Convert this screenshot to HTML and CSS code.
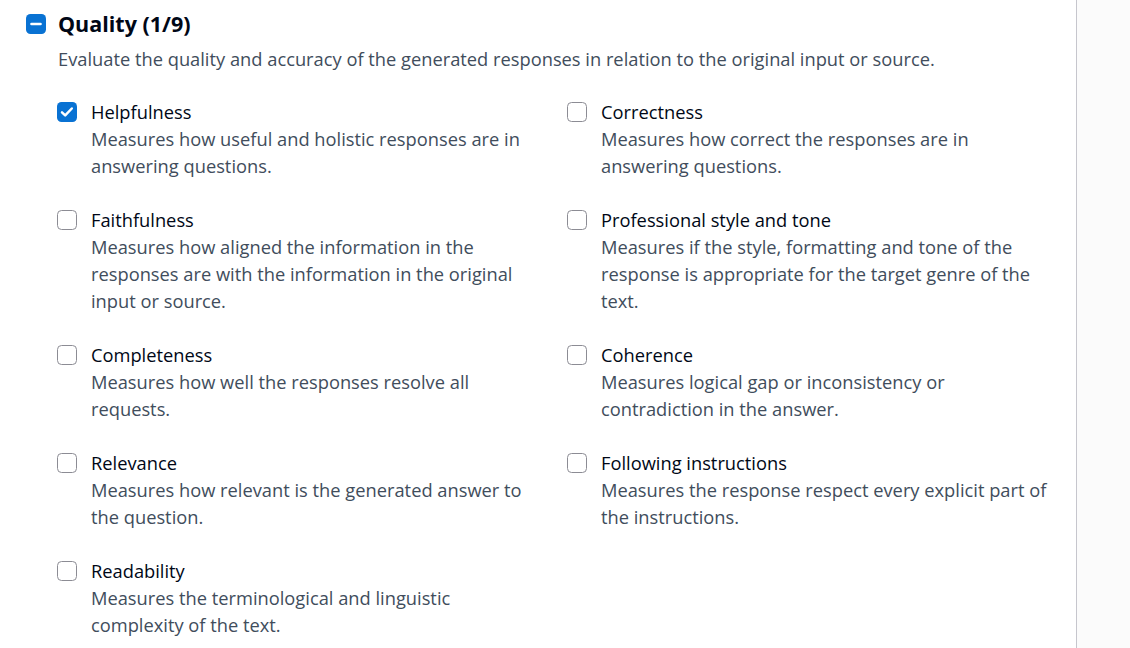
FILE: index.html
```html
<!DOCTYPE html>
<html>
<head>
<meta charset="utf-8">
<link rel="stylesheet" href="styles.css">
</head>
<body>
<div class="page">
  <main class="main">
    <div class="group-header">
      <span class="box box-indeterminate">
        <svg viewBox="0 0 20 20" width="20" height="20"><path d="M5.5 10h9" stroke="#fff" stroke-width="2.6" stroke-linecap="round"/></svg>
      </span>
      <h2 class="title">Quality (1/9)</h2>
    </div>
    <p class="group-desc">Evaluate the quality and accuracy of the generated responses in relation to the original input or source.</p>

    <div class="options">
      <label class="option">
        <span class="box box-checked">
          <svg viewBox="0 0 20 20" width="20" height="20"><path d="M5 10.3l3.2 3.1 6.6-6.9" fill="none" stroke="#fff" stroke-width="2.5" stroke-linecap="round" stroke-linejoin="round"/></svg>
        </span>
        <span class="text">
          <span class="name">Helpfulness</span>
          <span class="desc">Measures how useful and holistic responses are in answering questions.</span>
        </span>
      </label>
      <label class="option">
        <span class="box"></span>
        <span class="text">
          <span class="name">Correctness</span>
          <span class="desc">Measures how correct the responses are in answering questions.</span>
        </span>
      </label>
      <label class="option">
        <span class="box"></span>
        <span class="text">
          <span class="name">Faithfulness</span>
          <span class="desc">Measures how aligned the information in the responses are with the information in the original input or source.</span>
        </span>
      </label>
      <label class="option">
        <span class="box"></span>
        <span class="text">
          <span class="name">Professional style and tone</span>
          <span class="desc">Measures if the style, formatting and tone of the response is appropriate for the target genre of the text.</span>
        </span>
      </label>
      <label class="option">
        <span class="box"></span>
        <span class="text">
          <span class="name">Completeness</span>
          <span class="desc">Measures how well the responses resolve all requests.</span>
        </span>
      </label>
      <label class="option">
        <span class="box"></span>
        <span class="text">
          <span class="name">Coherence</span>
          <span class="desc">Measures logical gap or inconsistency or contradiction in the answer.</span>
        </span>
      </label>
      <label class="option">
        <span class="box"></span>
        <span class="text">
          <span class="name">Relevance</span>
          <span class="desc">Measures how relevant is the generated answer to the question.</span>
        </span>
      </label>
      <label class="option">
        <span class="box"></span>
        <span class="text">
          <span class="name">Following instructions</span>
          <span class="desc">Measures the response respect every explicit part of the instructions.</span>
        </span>
      </label>
      <label class="option">
        <span class="box"></span>
        <span class="text">
          <span class="name">Readability</span>
          <span class="desc">Measures the terminological and linguistic complexity of the text.</span>
        </span>
      </label>
    </div>
  </main>
  <aside class="side"></aside>
</div>
</body>
</html>
```
FILE: styles.css
```css
html, body {
  margin: 0;
  padding: 0;
  background: #ffffff;
}

body {
  font-family: "Open Sans", "Noto Sans", Arial, sans-serif;
  font-size: 18.3px;
  line-height: 27px;
  color: #000716;
}

.page {
  display: flex;
  height: 648px;
  overflow: hidden;
}

.main {
  width: 1077px;
  flex: 0 0 1077px;
  box-sizing: border-box;
  border-right: 1px solid #c6c6cd;
  padding: 10px 0 0 26px;
}

.side {
  flex: 1;
  background: #fbfbfb;
}

.group-header {
  display: flex;
  align-items: center;
  gap: 12px;
  height: 28px;
}

.title {
  margin: 0;
  font-size: 21.5px;
  line-height: 28px;
  font-weight: 700;
  color: #000716;
}

.group-desc {
  margin: 7px 0 0 32px;
  color: #414d5c;
}

.options {
  margin: 26px 0 0 31px;
  display: grid;
  grid-template-columns: 480px 480px;
  column-gap: 30px;
  row-gap: 27px;
}

.option {
  display: flex;
  align-items: flex-start;
  gap: 14px;
}

.box {
  flex: 0 0 auto;
  box-sizing: border-box;
  width: 20px;
  height: 20px;
  margin-top: 3.5px;
  border: 1.8px solid #8c8c94;
  border-radius: 4.5px;
  background: #fff;
  display: flex;
  align-items: center;
  justify-content: center;
}

.box svg {
  display: block;
}

.box-checked,
.box-indeterminate {
  border: none;
  background: #0972d3;
}

.box-indeterminate {
  margin-top: 0;
}

.text {
  display: flex;
  flex-direction: column;
  max-width: 449px;
}

.name {
  color: #000716;
}

.desc {
  color: #414d5c;
}
```
